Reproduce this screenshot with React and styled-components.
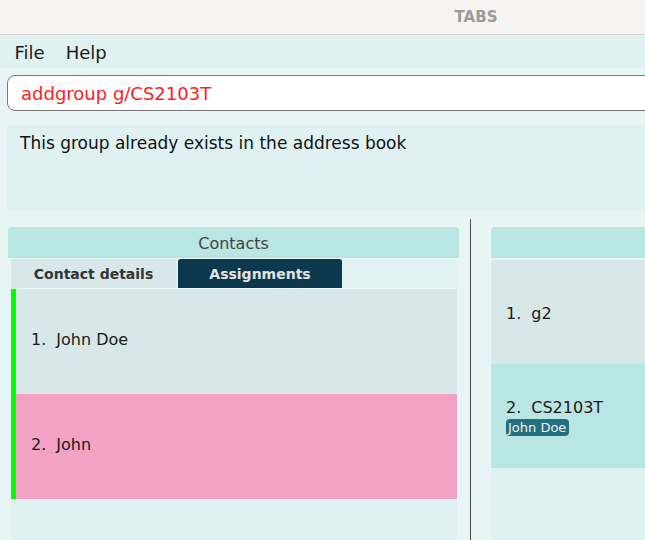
import React from 'react';
import styled, { createGlobalStyle } from 'styled-components';

const contacts = [
  { id: 1, name: 'John Doe', bg: '#d8e8e8' },
  { id: 2, name: 'John', bg: '#f4a2c3' },
];

const groups = [
  { id: 1, name: 'g2', bg: '#d8e8e8', members: [] },
  { id: 2, name: 'CS2103T', bg: '#b9e5e3', members: ['John Doe'] },
];

const GlobalStyle = createGlobalStyle`
  html, body {
    margin: 0;
    padding: 0;
    overflow: hidden;
  }
  body {
    font-family: 'DejaVu Sans', 'Liberation Sans', sans-serif;
  }
`;

const Window = styled.div`
  width: 952px;
  height: 540px;
  display: flex;
  flex-direction: column;
  background: #e8f5f5;
`;

// TITLE BAR
const TitleBar = styled.div`
  height: 34px;
  flex-shrink: 0;
  background: #f5f4f2;
  border-bottom: 1px solid #d6d6d6;
  display: flex;
  align-items: center;
  justify-content: center;
  font-weight: bold;
  font-size: 15px;
  color: #9a9a9a;
`;

const MenuBar = styled.div`
  height: 33px;
  flex-shrink: 0;
  background: #dff1f1;
  display: flex;
  align-items: center;
  padding: 2px 0 0 4px;
  box-sizing: border-box;
`;

const MenuItem = styled.span`
  padding: 0 10.5px;
  font-size: 18px;
  color: #1a1a1a;
`;

// COMMAND + RESULT
const CommandBox = styled.div`
  margin: 7px 0 0 7px;
  height: 34px;
  flex-shrink: 0;
  background: #fff;
  border: 1px solid #7a7a7a;
  border-radius: 8px 0 0 8px;
  display: flex;
  align-items: center;
  padding-left: 13px;
  font-size: 18px;
  color: #ff1c1c;
`;

const ResultBox = styled.div`
  margin: 14px 0 0 7px;
  height: 85px;
  flex-shrink: 0;
  background: #dff1f1;
  padding: 8px 13px;
  box-sizing: border-box;
  font-size: 17px;
  color: #111;
`;

// PANELS
const PanelsRow = styled.div`
  flex: 1;
  display: flex;
  margin-top: 9px;
  padding-left: 8px;
  min-height: 0;
`;

const Pane = styled.div`
  width: ${({ width }) => width};
  display: flex;
  flex-direction: column;
  padding-top: 8px;
`;

const Divider = styled.div`
  width: 1px;
  background: #4a4a4a;
  margin: 0 20px 0 11px;
`;

const PanelHeader = styled.div`
  height: 31px;
  flex-shrink: 0;
  background: #b9e5e3;
  border-radius: 4px 4px 0 0;
  display: flex;
  align-items: center;
  justify-content: center;
  padding-top: 1px;
  box-sizing: border-box;
  font-size: 16px;
  color: #444;
`;

const PanelBody = styled.div`
  flex: 1;
  display: flex;
  flex-direction: column;
  padding: ${({ inset }) => (inset ? '1px 2px 0 3px' : '2px 0 0 0')};
`;

const TabRow = styled.div`
  height: 29px;
  flex-shrink: 0;
  display: flex;
  gap: 2px;
  background: #e0f2f2;
  margin-bottom: 1px;
`;

const Tab = styled.div`
  width: ${({ active }) => (active ? '164px' : '165px')};
  display: flex;
  align-items: center;
  justify-content: center;
  font-size: 14px;
  font-weight: bold;
  background: ${({ active }) => (active ? '#0c394e' : '#d8e8e8')};
  color: ${({ active }) => (active ? '#e4e4e4' : '#333')};
  border-radius: ${({ active }) => (active ? '3px 3px 0 0' : '0')};
`;

const List = styled.div`
  flex: 1;
  background: #dff1f1;
  display: flex;
  flex-direction: column;
`;

const Card = styled.div`
  height: ${({ h }) => h}px;
  flex-shrink: 0;
  box-sizing: border-box;
  background: ${({ bg }) => bg};
  border-left: ${({ marked }) => (marked ? '5px solid #00ff00' : 'none')};
  display: flex;
  flex-direction: column;
  justify-content: center;
  padding: ${({ marked }) => (marked ? '0 0 4px 15px' : '2px 0 0 15px')};
`;

const CardLine = styled.div`
  display: flex;
  gap: 10px;
  font-size: 16px;
  color: #1a1a1a;
`;

const Tags = styled.div`
  display: flex;
  gap: 4px;
  margin-top: 2px;
`;

const Tag = styled.span`
  background: #25707f;
  color: #f0f0f0;
  font-size: 13px;
  padding: 0 3px 0 2px;
  border-radius: 4px;
  line-height: 17px;
`;

const App = () => {
  return (
    <Window>
      <GlobalStyle />
      <TitleBar>TABS</TitleBar>
      <MenuBar>
        <MenuItem>File</MenuItem>
        <MenuItem>Help</MenuItem>
      </MenuBar>
      <CommandBox>addgroup g/CS2103T</CommandBox>
      <ResultBox>This group already exists in the address book</ResultBox>
      <PanelsRow>
        <Pane width="451px">
          <PanelHeader>Contacts</PanelHeader>
          <PanelBody inset>
            <TabRow>
              <Tab>Contact details</Tab>
              <Tab active>Assignments</Tab>
            </TabRow>
            <List>
              {contacts.map((item) => (
                <Card key={item.id} bg={item.bg} h={105} marked>
                  <CardLine>
                    <span>{item.id}.</span>
                    <span>{item.name}</span>
                  </CardLine>
                </Card>
              ))}
            </List>
          </PanelBody>
        </Pane>
        <Divider />
        <Pane width="452px">
          <PanelHeader />
          <PanelBody>
            <List>
              {groups.map((item) => (
                <Card key={item.id} bg={item.bg} h={104}>
                  <CardLine>
                    <span>{item.id}.</span>
                    <span>{item.name}</span>
                  </CardLine>
                  {item.members.length > 0 && (
                    <Tags>
                      {item.members.map((m) => (
                        <Tag key={m}>{m}</Tag>
                      ))}
                    </Tags>
                  )}
                </Card>
              ))}
            </List>
          </PanelBody>
        </Pane>
      </PanelsRow>
    </Window>
  );
};

export default App;
